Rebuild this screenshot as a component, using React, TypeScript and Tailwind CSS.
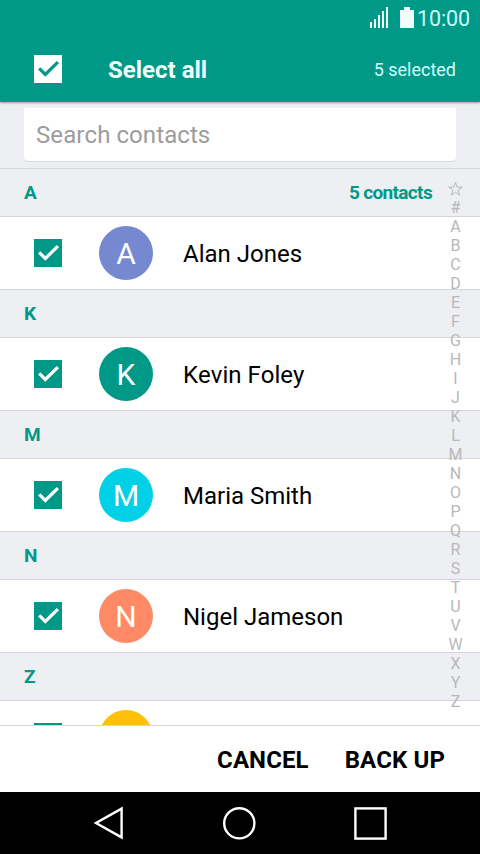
type Contact = { letter: string; name?: string; color: string };

const contacts: Contact[] = [
  { letter: "A", name: "Alan Jones", color: "bg-[#7688cf]" },
  { letter: "K", name: "Kevin Foley", color: "bg-[#009887]" },
  { letter: "M", name: "Maria Smith", color: "bg-[#00d1e6]" },
  { letter: "N", name: "Nigel Jameson", color: "bg-[#ff8a65]" },
  { letter: "Z", color: "bg-[#ffc107]" },
];

const indexLetters = "#ABCDEFGHIJKLMNOPQRSTUVWXYZ".split("");

function Checkbox({ inverted = false }: { inverted?: boolean }) {
  return (
    <span
      className={
        inverted
          ? "mb-px block size-7 shrink-0 bg-white text-[#009887]"
          : "block size-7 shrink-0 bg-[#009887] text-white"
      }
    >
      <svg viewBox="0 0 28 28" className="size-7" fill="none" stroke="currentColor" strokeWidth="3.2">
        <path d="M5.2 13.4 L11.3 19.5 L23.9 7.2" />
      </svg>
    </span>
  );
}

function StatusBar() {
  return (
    <div className="flex h-[37px] items-center justify-end pr-[10px] text-[#f1fdfb]">
      <svg className="mr-3 mb-[2px] h-[21px] w-[18px]" viewBox="0 0 18 21" fill="currentColor">
        <rect x="0" y="15" width="2" height="6" />
        <rect x="4" y="12" width="2" height="9" />
        <rect x="8" y="8" width="2" height="13" />
        <rect x="12" y="4" width="2" height="17" />
        <rect x="16" y="0" width="2" height="21" />
      </svg>
      <svg className="mr-[3px] mb-[2px] h-[21px] w-[14px]" viewBox="0 0 14 21" fill="currentColor">
        <path d="M4 0h6v3h4v18H0V3h4z" />
      </svg>
      <span className="w-[53px] pt-px text-[21.5px] leading-none tracking-[-0.1px] text-[#c9fffa]">10:00</span>
    </div>
  );
}

export default function App() {
  return (
    <div className="flex h-[854px] w-[480px] flex-col overflow-hidden bg-white font-['Roboto',sans-serif] [font-kerning:none]">
      <header className="relative z-10 h-[102px] shrink-0 bg-[#009887] shadow-[0_1px_2px_rgba(0,0,0,0.35)]">
        <StatusBar />
        <div className="flex h-[65px] items-center pr-6 pl-[34px]">
          <Checkbox inverted />
          <h1 className="ml-[46px] text-2xl font-bold text-[#f0fffd]">Select all</h1>
          <span className="ml-auto text-lg text-[#d5fffb]">5 selected</span>
        </div>
      </header>

      <div className="h-[66px] shrink-0 bg-[#edeff3] px-6 pt-[6px]">
        <div className="flex h-[53px] items-center rounded-b-sm bg-white px-3 text-2xl tracking-[0.08px] text-[#9c9c9c] shadow-[0_1px_0_#d8d9dc]">
          Search contacts
        </div>
      </div>

      <main className="relative h-[557px] shrink-0 overflow-hidden">
        {contacts.map((c, i) => (
          <section key={c.letter}>
            <div className="flex h-[49px] items-center justify-between border-y border-[#d5d6d9] bg-[#edeff3] pt-[2px] pr-12 pl-6 text-[19px] font-bold text-[#009887]">
              <h2>{c.letter}</h2>
              {i === 0 && <span className="tracking-[-0.65px]">5 contacts</span>}
            </div>
            <div className="flex h-[72px] items-center pl-[34px]">
              <Checkbox />
              <span
                className={`ml-[37px] flex size-[54px] items-center justify-center rounded-full text-[30px] text-white ${c.color}`}
              >
                {c.name?.[0]}
              </span>
              {c.name && <span className="ml-[30px] pt-[2px] text-2xl text-black">{c.name}</span>}
            </div>
          </section>
        ))}

        <nav className="absolute top-[13px] right-[14px] flex w-[21px] flex-col items-center text-base text-[#b8b8b8]">
          <svg className="mb-px h-4 w-4" viewBox="0 0 16 16" fill="none" stroke="currentColor" strokeWidth="1">
            <path d="M7.5 1.2 L9.1 6.1 H14.3 L10.1 9.2 L11.7 14.2 L7.5 11.1 L3.3 14.2 L4.9 9.2 L0.7 6.1 H5.9 Z" />
          </svg>
          {indexLetters.map((l) => (
            <span key={l} className="h-[19px] leading-[19px]">
              {l}
            </span>
          ))}
        </nav>
      </main>

      <footer className="flex h-[67px] shrink-0 items-center justify-end gap-9 border-t border-[#d5d6d9] bg-white pt-[2px] pr-[35px] text-2xl font-bold tracking-[0.1px] text-black">
        <button>CANCEL</button>
        <button>BACK UP</button>
      </footer>

      <div className="flex h-[62px] shrink-0 items-center bg-black pl-[93px] text-white">
        <svg className="h-[34px] w-[31px]" viewBox="0 0 31 34" fill="none" stroke="currentColor" strokeWidth="2.4">
          <path d="M28.6 2.6 V31.4 L3 17 Z" />
        </svg>
        <svg className="ml-[98px] size-[34px]" viewBox="0 0 34 34" fill="none" stroke="currentColor" strokeWidth="2.4">
          <circle cx="17.3" cy="17.3" r="15.1" />
        </svg>
        <svg className="ml-[97px] size-[34px]" viewBox="0 0 34 34" fill="none" stroke="currentColor" strokeWidth="2.4">
          <rect x="2.4" y="2.4" width="30.2" height="30.2" />
        </svg>
      </div>
    </div>
  );
}
